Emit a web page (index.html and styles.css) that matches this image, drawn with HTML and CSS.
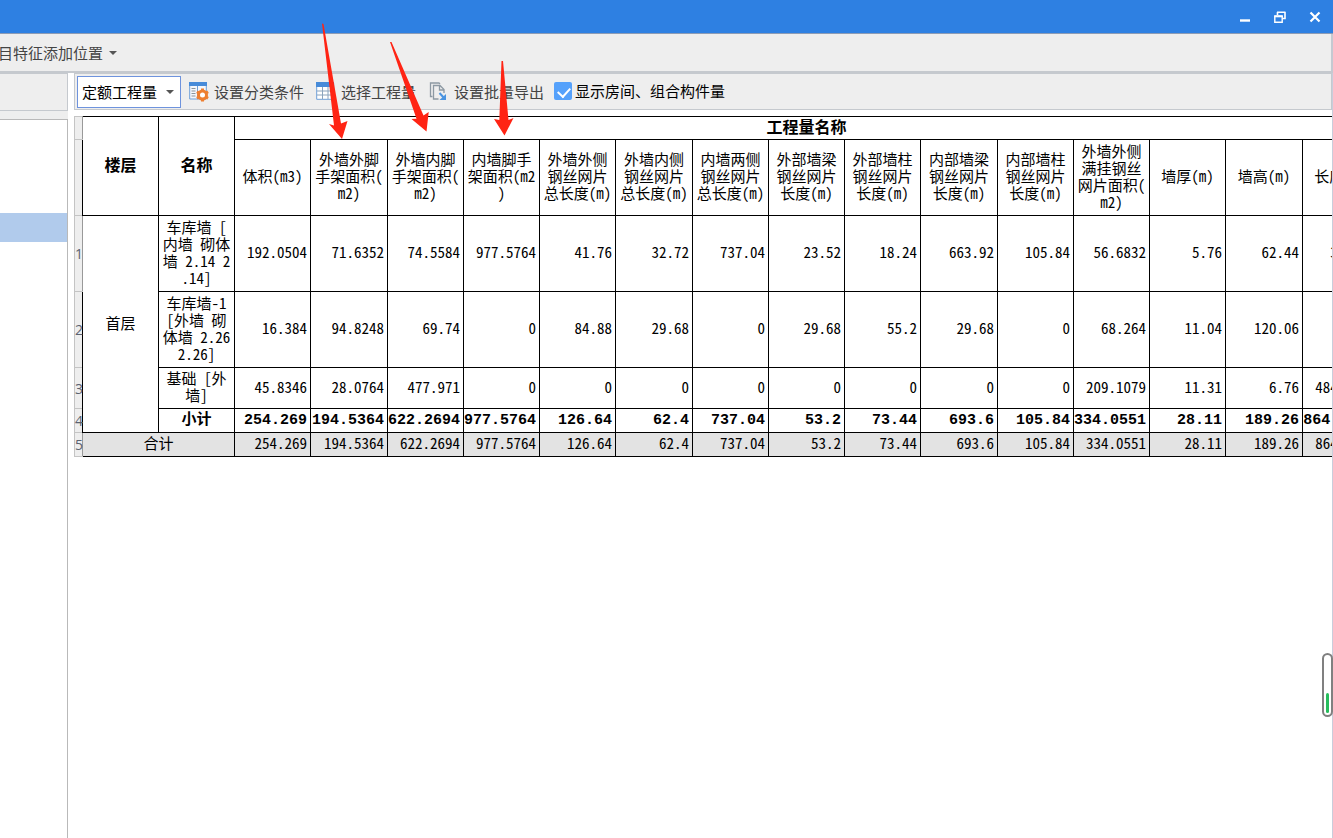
FILE: index.html
```html
<!DOCTYPE html>
<html lang="zh-CN">
<head>
<meta charset="utf-8">
<title>定额工程量</title>
<link rel="stylesheet" href="styles.css">
</head>
<body>
<div class="app">
  <header class="titlebar">
    <button class="win-btn" type="button" aria-label="最小化"><svg width="12" height="12" viewBox="0 0 12 12"><path d="M1 9.500h10" stroke="#fff" stroke-width="2.400"/></svg></button>
    <button class="win-btn" type="button" aria-label="还原"><svg width="12" height="12" viewBox="0 0 12 12" fill="none" stroke="#fff"><path d="M3.500 4V1M3 1.300h8.500M11 1v6.500H8.500" stroke-width="1.600"/><path d="M.8 5.300h7.400v6H.8z" stroke-width="1.400"/><path d="M.3 5.300h8.400" stroke-width="2"/></svg></button>
    <button class="win-btn" type="button" aria-label="关闭"><svg width="12" height="12" viewBox="0 0 12 12"><path d="M1.500 1.500l9 9M10.500 1.500l-9 9" stroke="#fff" stroke-width="2.200"/></svg></button>
  </header>
  <div class="ribbon">
    <button class="ribbon-btn" type="button">目特征添加位置<span class="caret"></span></button>
  </div>
  <div class="workspace">
    <aside class="side">
      <div class="side-head"></div>
      <div class="side-body"><div class="side-selected"></div></div>
    </aside>
    <main class="main">
      <div class="toolbar">
        <label class="combo">
          <select aria-label="工程量类型"><option>定额工程量</option></select>
          <span class="caret combo-caret"></span>
        </label>
        <button class="tool classify" type="button">
          <svg width="20" height="20" viewBox="0 0 20 20"><path d="M.7 1h16.600v16H.7z" fill="#f4f7fb" stroke="#6f9fd8" stroke-width="1"/><path d="M0 0h18v4H0z" fill="#478bd9"/><path d="M2.500 6.500h4M2.500 9h4M2.500 11.500h4M2.500 14h4" stroke="#8b949c"/><path d="M8.500 4v13" stroke="#6f9fd8"/><g transform="translate(13.500 13)"><circle r="4" fill="#fff" stroke="#ee7f30" stroke-width="3"/><path d="M0-6.500v2.500M0 4v2.500M-5.600-3.200l2.200 1.200M3.400 2l2.200 1.200M-5.600 3.200l2.200-1.200M3.400-2l2.200-1.200" stroke="#ee7f30" stroke-width="3"/></g></svg>
          <span>设置分类条件</span>
        </button>
        <button class="tool choose" type="button">
          <svg width="20" height="20" viewBox="0 0 20 20"><path d="M.7 1h17v16.300H.7z" fill="#fff" stroke="#6f9fd8"/><path d="M0 0h18v5H0z" fill="#478bd9"/><path d="M1 9h17M1 13h17M6.500 5v12M12 5v12" stroke="#8ba4bd"/></svg>
          <span>选择工程量</span>
        </button>
        <button class="tool export" type="button">
          <svg width="20" height="20" viewBox="0 0 20 20" fill="none"><path d="M3.500 14.500h-2V1h8.500l1 1" stroke="#8d99a3" stroke-width="1.300"/><path d="M9.500 17h-5V3.500h6.500l4 4v3.500M10.500 3.500V8H15" stroke="#8d99a3" stroke-width="1.300"/><path d="M10.500 11l5 5.500" stroke="#4b94e0" stroke-width="2"/><path d="M17 12v6h-6.500z" fill="#4b94e0"/></svg>
          <span>设置批量导出</span>
        </button>
        <label class="check"><input type="checkbox" checked><span>显示房间、组合构件量</span></label>
      </div>
      <div class="grid">
        <table>
          <colgroup><col class="c-index"><col span="3"><col class="wide"><col span="3"><col class="wide"><col span="3"><col class="wide"><col span="3"><col class="wide"><col></colgroup>
          <thead>
            <tr class="r-group"><th class="idx"></th><th class="strong" rowspan="2">楼层</th><th class="strong" rowspan="2">名称</th><th class="strong" colspan="15">工程量名称</th></tr>
            <tr class="r-tall"><th class="idx"></th><th>体积(m3)</th><th>外墙外脚<br>手架面积(<br>m2)</th><th>外墙内脚<br>手架面积(<br>m2)</th><th>内墙脚手<br>架面积(m2<br>)</th><th>外墙外侧<br>钢丝网片<br>总长度(m)</th><th>外墙内侧<br>钢丝网片<br>总长度(m)</th><th>内墙两侧<br>钢丝网片<br>总长度(m)</th><th>外部墙梁<br>钢丝网片<br>长度(m)</th><th>外部墙柱<br>钢丝网片<br>长度(m)</th><th>内部墙梁<br>钢丝网片<br>长度(m)</th><th>内部墙柱<br>钢丝网片<br>长度(m)</th><th>外墙外侧<br>满挂钢丝<br>网片面积(<br>m2)</th><th>墙厚(m)</th><th>墙高(m)</th><th>长度(m)</th></tr>
          </thead>
          <tbody>
            <tr class="r-tall"><th class="idx">1</th><td class="name" rowspan="4">首层</td><td class="name">车库墙 [<br>内墙 砌体<br>墙 2.14 2<br>.14]</td><td>192.0504</td><td>71.6352</td><td>74.5584</td><td>977.5764</td><td>41.76</td><td>32.72</td><td>737.04</td><td>23.52</td><td>18.24</td><td>663.92</td><td>105.84</td><td>56.6832</td><td>5.76</td><td>62.44</td><td>345.62</td></tr>
            <tr class="r-tall"><th class="idx">2</th><td class="name">车库墙-1<br>[外墙 砌<br>体墙 2.26<br>2.26]</td><td>16.384</td><td>94.8248</td><td>69.74</td><td>0</td><td>84.88</td><td>29.68</td><td>0</td><td>29.68</td><td>55.2</td><td>29.68</td><td>0</td><td>68.264</td><td>11.04</td><td>120.06</td><td>34.78</td></tr>
            <tr class="r-mid"><th class="idx">3</th><td class="name">基础 [外<br>墙]</td><td>45.8346</td><td>28.0764</td><td>477.971</td><td>0</td><td>0</td><td>0</td><td>0</td><td>0</td><td>0</td><td>0</td><td>0</td><td>209.1079</td><td>11.31</td><td>6.76</td><td>484.1524</td></tr>
            <tr class="r-sum subtotal"><th class="idx">4</th><td class="name">小计</td><td>254.269</td><td>194.5364</td><td>622.2694</td><td>977.5764</td><td>126.64</td><td>62.4</td><td>737.04</td><td>53.2</td><td>73.44</td><td>693.6</td><td>105.84</td><td>334.0551</td><td>28.11</td><td>189.26</td><td>864.5524</td></tr>
            <tr class="r-sum total"><th class="idx">5</th><td class="name" colspan="2">合计</td><td>254.269</td><td>194.5364</td><td>622.2694</td><td>977.5764</td><td>126.64</td><td>62.4</td><td>737.04</td><td>53.2</td><td>73.44</td><td>693.6</td><td>105.84</td><td>334.0551</td><td>28.11</td><td>189.26</td><td>864.5524</td></tr>
          </tbody>
        </table>
      </div>
    </main>
  </div>
  <svg class="arrows" width="560" height="150" viewBox="0 0 560 150" fill="#ff2414">
    <path d="M322 23.500L323.500 24L341 123.500L347.500 121L342 139L329 124L334 125.500z"/>
    <path d="M390 42L391.500 42L423.500 115.500L428.700 112L426.500 131.500L411.500 119L416.500 118.700z"/>
    <path d="M501.500 61H503L508.500 120L513.500 118L504.500 135.500L494 119L499.300 120z"/>
  </svg>
  <div class="level"><span></span></div>
</div>
</body>
</html>
```
FILE: styles.css
```css
* { box-sizing: border-box; }
body {
  margin: 0;
  background: #fff;
  color: #000;
  font: 15px/17px "Noto Sans CJK SC", sans-serif;
}
button, select, input { margin: 0; padding: 0; font: inherit; color: inherit; }
button { border: 0; background: none; }
svg { display: block; }
.app {
  position: relative;
  display: flex;
  flex-direction: column;
  height: 100vh;
  overflow: hidden;
}
.titlebar {
  display: flex;
  flex: none;
  justify-content: flex-end;
  align-items: center;
  gap: 23px;
  height: 34px;
  padding-right: 12px;
  background: #2e80e2;
  border-bottom: 1px solid #8d9cb5;
}
.ribbon {
  display: flex;
  flex: none;
  align-items: center;
  height: 39px;
  background: #eee;
  border-right: 2px solid #c5c9d1;
  border-bottom: 2px solid #c5c9ce;
}
.ribbon-btn { display: flex; align-items: center; margin-left: -2px; color: #444; }
.caret {
  width: 7px;
  margin-left: 6px;
  border: 4px solid transparent;
  border-top-color: #555;
  border-bottom: 0;
}
.workspace { display: flex; flex: 1; min-height: 0; }
.side { display: flex; flex: none; flex-direction: column; width: 68px; background: #eee; }
.side-head { height: 38px; border: 1px solid #c5c9ce; border-left: 0; }
.side-body {
  flex: 1;
  margin-top: 8px;
  padding-top: 93px;
  background: #fff;
  border-top: 1px solid #b9b9b9;
  border-right: 1px solid #b9b9b9;
}
.side-selected { height: 29px; background: #b1cbec; }
.main {
  display: flex;
  flex: 1;
  flex-direction: column;
  min-width: 0;
  padding-left: 6px;
  border-right: 1px solid #c9cddb;
}
.toolbar {
  display: flex;
  flex: none;
  align-items: center;
  height: 37px;
  padding-left: 2px;
  background: #eee;
  border: 1px solid #c5c9ce;
}
.combo { position: relative; width: 104px; height: 32px; }
.combo select {
  width: 100%;
  height: 100%;
  padding-left: 4px;
  appearance: none;
  background: #fff;
  border: 1px solid #6e93dd;
  border-radius: 0;
}
.combo-caret { position: absolute; right: 7px; top: 14px; pointer-events: none; }
.tool { display: flex; align-items: center; gap: 5px; color: #444; white-space: nowrap; }
.classify { margin-left: 8px; }
.choose { margin-left: 12px; }
.export { margin-left: 13px; }
.check { display: flex; align-items: center; gap: 3px; margin-left: 10px; padding-bottom: 2px; white-space: nowrap; }
.check input { position: relative; width: 18px; height: 18px; appearance: none; background: #55a1fb; border-radius: 2px; }
.check input:checked::after {
  content: "";
  position: absolute;
  left: 6px;
  top: 3px;
  width: 6px;
  height: 10px;
  border: solid #fff;
  border-width: 0 2px 2px 0;
  rotate: 42deg;
}
.grid { flex: 1; min-height: 0; padding-top: 6px; overflow: hidden; }
table {
  width: 1305px;
  table-layout: fixed;
  border-collapse: collapse;
  font-feature-settings: "hwid";
}
col { width: 76px; }
.wide { width: 77px; }
.c-index { width: 8px; }
th, td { padding: 0 0 4px; border: 1px solid #000; font-weight: 400; white-space: nowrap; }
td { padding-right: 3px; text-align: right; }
.name { padding-right: 0; text-align: center; }
.strong { font-weight: 700; font-size: 16px; }
.idx {
  padding: 0;
  background: #eee;
  border-color: #c4c4c4;
  border-right-color: #999;
  color: #5b6270;
  font: 14px/17px "Open Sans", sans-serif;
}
.r-group { height: 23px; }
.r-tall { height: 76px; }
.r-mid { height: 41px; }
.r-sum { height: 24px; }
.subtotal td {
  padding-bottom: 0;
  font: 700 15px/17px "Liberation Mono", "Noto Sans CJK SC", monospace;
}
.total td { background: #e3e3e3; }
.arrows { position: absolute; left: 0; top: 0; pointer-events: none; }
.level {
  position: absolute;
  right: 0;
  top: 653px;
  display: flex;
  align-items: flex-end;
  width: 11px;
  height: 64px;
  padding: 2px;
  background: #fff;
  border: 2px solid #808080;
  border-radius: 6px;
}
.level span { flex: 1; height: 20px; background: #27bd5d; border-radius: 2px; }
```
